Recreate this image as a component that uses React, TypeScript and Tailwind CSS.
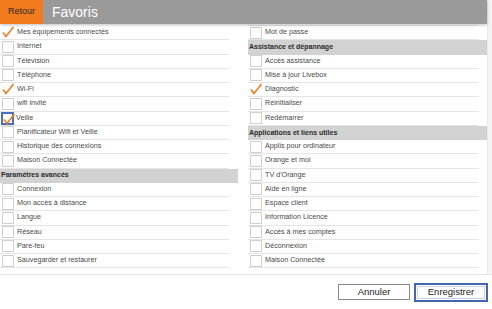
import React from 'react';

type Item = { label: string; checked?: boolean; focused?: boolean; section?: boolean };

const left: Item[] = [
  { label: 'Mes équipements connectés', checked: true },
  { label: 'Internet' },
  { label: 'Télévision' },
  { label: 'Téléphone' },
  { label: 'Wi-Fi', checked: true },
  { label: 'wifi invité' },
  { label: 'Veille', checked: true, focused: true },
  { label: 'Planificateur Wifi et Veille' },
  { label: 'Historique des connexions' },
  { label: 'Maison Connectée' },
  { label: 'Paramètres avancés', section: true },
  { label: 'Connexion' },
  { label: 'Mon accès à distance' },
  { label: 'Langue' },
  { label: 'Réseau' },
  { label: 'Pare-feu' },
  { label: 'Sauvegarder et restaurer' }
];

const right: Item[] = [
  { label: '' },
  { label: 'Mot de passe' },
  { label: 'Assistance et dépannage', section: true },
  { label: 'Accès assistance' },
  { label: 'Mise à jour Livebox' },
  { label: 'Diagnostic', checked: true },
  { label: 'Réinitialiser' },
  { label: 'Redémarrer' },
  { label: 'Applications et liens utiles', section: true },
  { label: 'Applis pour ordinateur' },
  { label: 'Orange et moi' },
  { label: "TV d'Orange" },
  { label: 'Aide en ligne' },
  { label: 'Espace client' },
  { label: 'Information Licence' },
  { label: 'Accès à mes comptes' },
  { label: 'Déconnexion' },
  { label: 'Maison Connectée' }
];

function Check() {
  return (
    <svg width="13" height="13" viewBox="0 0 13 13" className="absolute left-[0px] top-[-1px]">
      <polyline points="1,6.5 4,10.5 11.5,1" fill="none" stroke="#ef7d1f" strokeWidth="1.6" />
    </svg>
  );
}

function Row({ item }: { item: Item }) {
  if (item.section) {
    return (
      <div className="flex h-[14.25px] items-center bg-[#d2d2d2] pl-[1px] text-[7px] font-bold text-[#2b2b2b]">
        {item.label}
      </div>
    );
  }
  return (
    <div className="mr-[9px] flex h-[14.25px] items-center border-b border-[#e4e4e4]">
      <div
        className={
          item.focused
            ? 'relative ml-[1px] h-[13px] w-[13px] border-2 border-[#4b6fbf]'
            : item.checked
              ? 'relative ml-[2px] h-[12px] w-[12px]'
              : 'relative ml-[2px] h-[12px] w-[12px] border border-[#cfcfcf]'
        }
      >
        {item.checked && <Check />}
      </div>
      <span className={item.focused ? 'ml-[2px] text-[7.2px] text-[#4a4a4a]' : 'ml-[3px] text-[7.2px] text-[#4a4a4a]'}>
        {item.label}
      </span>
    </div>
  );
}

export default function App() {
  return (
    <div className="flex h-[309px] w-[492px] flex-col overflow-hidden bg-white font-['Liberation_Sans',Arial,sans-serif]">
      <div className="flex h-[275px] border-b border-[#e6e6e6]">
        <div className="flex w-[487px] flex-col">
          <div className="relative z-10 flex h-[24px] items-center bg-[#9a9a9a] shadow-[0_1px_3px_rgba(0,0,0,0.25)]">
            <div className="flex h-full w-[43px] items-center justify-center bg-[#f27b1e] text-[9px] text-[#2a2a2a]">Retour</div>
            <div className="ml-[9px] text-[14px] text-white">Favoris</div>
          </div>
          <div className="flex flex-1 overflow-hidden">
            <div className="w-[238px] pt-[2px]">
              {left.map((it, i) => (
                <Row key={i} item={it} />
              ))}
            </div>
            <div className="ml-[10px] mt-[-12.25px] w-[239px]">
              {right.map((it, i) => (
                <Row key={i} item={it} />
              ))}
            </div>
          </div>
        </div>
        <div className="w-[5px] border-l border-[#e8e8e8] bg-[#f4f4f4]" />
      </div>
      <div className="flex flex-1 items-center justify-end gap-[4px] pr-[4px]">
        <button type="button" className="h-[16px] w-[72px] border border-[#8a8a8a] bg-white text-[9.5px] text-[#222]">
          Annuler
        </button>
        <button
          type="button"
          className="h-[19px] w-[74px] border-2 border-[#4466ad] bg-white text-[9.5px] text-[#222] outline outline-1 -outline-offset-4 outline-[#c9d4ea]"
        >
          Enregistrer
        </button>
      </div>
    </div>
  );
}
